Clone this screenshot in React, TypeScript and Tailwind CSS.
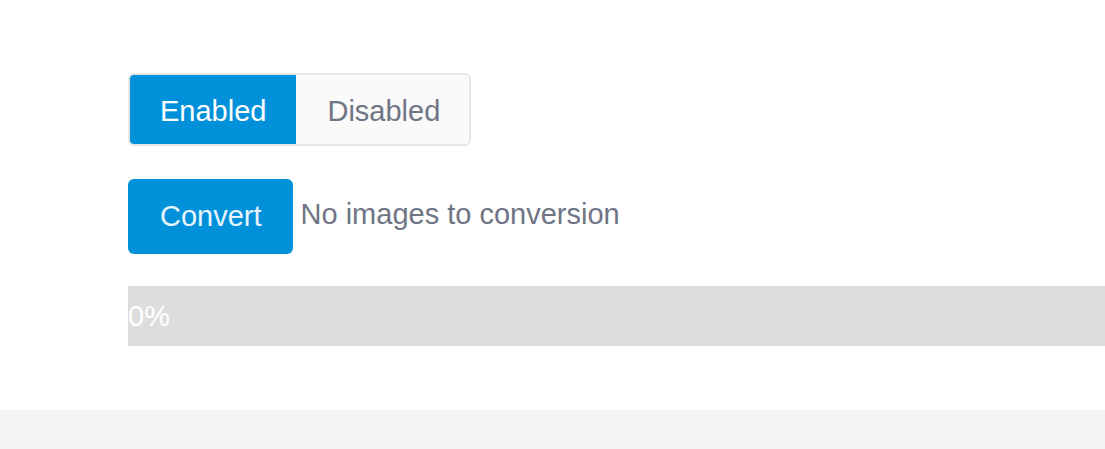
export default function App() {
  return (
    <div
      className="min-h-screen flex flex-col bg-white"
      style={{ fontFamily: '"Liberation Sans", Arial, sans-serif' }}
    >
      <main className="h-[410px] pt-[73px] pl-[128px]">
        {/* Enabled / Disabled toggle */}
        <div className="inline-flex h-[73px] rounded-[6px] border-2 border-[#e6e6e6] overflow-hidden">
          <button className="px-[30px] pt-[3px] bg-[#0091da] text-white text-[29px] leading-none">
            Enabled
          </button>
          <button className="pl-[31px] pr-[29px] pt-[3px] bg-[#fafafa] text-[#6f7584] text-[29px] leading-none">
            Disabled
          </button>
        </div>

        {/* Convert row */}
        <div className="mt-[33px] flex items-center gap-[8px]">
          <button className="h-[75px] pl-[32px] pr-[31px] rounded-[6px] bg-[#0091da] text-[#e8f4fb] text-[29px] leading-none">
            Convert
          </button>
          <span className="text-[29px] text-[#6f7584] leading-none -mt-[4px]">
            No images to conversion
          </span>
        </div>

        {/* Progress */}
        <div className="mt-[32px] h-[60px] bg-[#dddddd] flex items-center">
          <span className="text-white text-[29px] leading-none">0%</span>
        </div>
      </main>
      <footer className="flex-1 bg-[#f5f5f5]" />
    </div>
  )
}
